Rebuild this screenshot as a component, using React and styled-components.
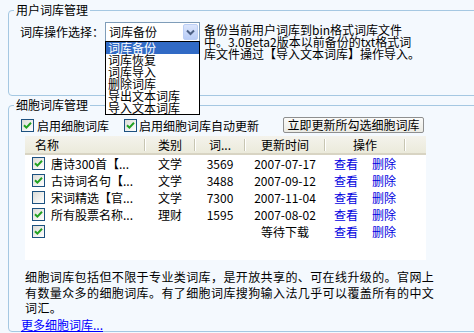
import React from "react";
import styled, { createGlobalStyle } from "styled-components";

const GlobalStyle = createGlobalStyle`
  html, body {
    margin: 0;
    padding: 0;
    background: #f4f9fe;
    overflow: hidden;
  }
  body {
    font-family: "Noto Sans CJK SC", "Noto Sans", sans-serif;
    font-size: 12px;
    color: #000;
  }
`;

const Page = styled.div`
  width: 474px;
  height: 333px;
  overflow: hidden;
  padding-top: 3px;
  box-sizing: border-box;
`;

const Group = styled.fieldset`
  margin: 0 0 2px 8px;
  padding: 0;
  width: 490px;
  height: ${(p) => p.$h}px;
  box-sizing: border-box;
  border: 1px solid #a5c8e2;
  border-radius: 4px;
  min-inline-size: 0;
`;

const Legend = styled.legend`
  margin-left: 5px;
  padding: 0 2px;
  line-height: 14px;
  font-size: 12px;
`;

const OpRow = styled.div`
  display: flex;
  align-items: flex-start;
  padding: 5px 0 0 11px;
`;

const OpLabel = styled.span`
  width: 85px;
  line-height: 20px;
  white-space: nowrap;
`;

const Select = styled.div`
  position: relative;
  width: 95px;
  height: 20px;
  box-sizing: border-box;
  border: 1px solid #7f9db9;
  background: #fff;
  display: flex;
  align-items: center;
`;

const SelectValue = styled.span`
  flex: 1;
  padding-left: 3px;
  line-height: 18px;
`;

const ArrowBtn = styled.span`
  width: 15px;
  height: 16px;
  margin-right: 1px;
  box-sizing: border-box;
  border: 1px solid #bccff5;
  border-radius: 2px;
  background: linear-gradient(#dbe5fc, #b9cdf7);
  display: flex;
  align-items: center;
  justify-content: center;
`;

const DropList = styled.ul`
  position: absolute;
  top: 18px;
  left: -1px;
  width: 95px;
  margin: 0;
  padding: 0;
  list-style: none;
  box-sizing: border-box;
  border: 1px solid #000;
  background: #fff;
  z-index: 5;
`;

const DropItem = styled.li`
  line-height: 12px;
  height: 12px;
  padding-left: 2px;
  white-space: nowrap;
  background: ${(p) => (p.$active ? "#316ac5" : "transparent")};
  color: ${(p) => (p.$active ? "#fff" : "#000")};
`;

const Desc = styled.div`
  margin: 2px 0 0 4px;
  line-height: 12px;
  white-space: nowrap;
`;

const OptionsRow = styled.div`
  display: flex;
  align-items: center;
  height: 16px;
  margin-top: 5px;
  padding-left: 12px;
`;

const CheckLabel = styled.label`
  display: flex;
  align-items: center;
  gap: ${(p) => p.$gap || 3}px;
  margin-right: ${(p) => p.$mr || 0}px;
  white-space: nowrap;
`;

const Box = styled.span`
  width: 13px;
  height: 13px;
  flex: none;
  box-sizing: border-box;
  border: 1px solid #1c5180;
  background: linear-gradient(135deg, #dcdcd7, #ffffff);
  display: flex;
  align-items: center;
  justify-content: center;
`;

const Button = styled.button`
  margin-left: 24px;
  width: 141px;
  height: 16px;
  padding: 0;
  box-sizing: border-box;
  border: 1px solid #8e8f8f;
  border-radius: 2px;
  background: linear-gradient(#fbfbf9, #ebebe4);
  font-family: inherit;
  font-size: 12px;
  line-height: 14px;
  color: #000;
`;

const ListView = styled.div`
  margin: 3px 0 0 16px;
  width: 401px;
  height: 124px;
  background: #fff;
`;

const Grid = styled.div`
  display: grid;
  grid-template-columns: 120px 50px 50px 80px 80px 21px;
`;

const Header = styled(Grid)`
  height: 19px;
  box-sizing: border-box;
  background: linear-gradient(#f4f3ec, #ebeadb);
  border-bottom: 2px solid #d8d4c3;
`;

const HeadCell = styled.div`
  position: relative;
  line-height: 17px;
  text-align: ${(p) => (p.$left ? "left" : "center")};
  padding-left: ${(p) => (p.$left ? 10 : 0)}px;
  &::after {
    content: "";
    display: ${(p) => (p.$last ? "none" : "block")};
    position: absolute;
    right: 0;
    top: 3px;
    width: 1px;
    height: 12px;
    background: #c7c5b2;
    box-shadow: 1px 0 0 #fff;
  }
`;

const Row = styled(Grid)`
  height: 17px;
  align-items: center;
`;

const NameCell = styled.div`
  display: flex;
  align-items: center;
  gap: 6px;
  padding-left: 7px;
  white-space: nowrap;
`;

const Cell = styled.div`
  text-align: center;
  white-space: nowrap;
  line-height: 17px;
`;

const Actions = styled.div`
  display: flex;
  justify-content: center;
  gap: 14px;
`;

const ActLink = styled.a`
  color: #0000e0;
  text-decoration: none;
`;

const Para = styled.p`
  margin: 9px 0 0 16px;
  letter-spacing: 0.4px;
  line-height: 15.5px;
  white-space: nowrap;
`;

const MoreLink = styled.a`
  display: inline-block;
  margin-left: 12px;
  line-height: 14px;
  color: #0000ff;
  text-decoration: underline;
`;

const Check = () => (
  <svg width="9" height="9" viewBox="0 0 9 9">
    <path d="M1 4.2 L3.4 6.6 L8 1.8" fill="none" stroke="#21a121" strokeWidth="2" />
  </svg>
);

const Checkbox = ({ checked }) => <Box>{checked && <Check />}</Box>;

const Chevron = () => (
  <svg width="9" height="7" viewBox="0 0 9 7">
    <path d="M1 1.5 L4.5 5 L8 1.5" fill="none" stroke="#4d6185" strokeWidth="2" />
  </svg>
);

const ops = ["词库备份", "词库恢复", "词库导入", "删除词库", "导出文本词库", "导入文本词库"];

const rows = [
  { on: true, name: "唐诗300首【...", cat: "文学", n: "3569", date: "2007-07-17" },
  { on: true, name: "古诗词名句【...", cat: "文学", n: "3488", date: "2007-09-12" },
  { on: false, name: "宋词精选【官...", cat: "文学", n: "7300", date: "2007-11-04" },
  { on: true, name: "所有股票名称...", cat: "理财", n: "1595", date: "2007-08-02" },
  { on: true, name: "", cat: "", n: "", date: "等待下载" },
];

const App = () => {
  return (
    <Page>
      <GlobalStyle />
      <Group $h={93}>
        <Legend>用户词库管理</Legend>
        <OpRow>
          <OpLabel>词库操作选择：</OpLabel>
          <Select>
            <SelectValue>词库备份</SelectValue>
            <ArrowBtn>
              <Chevron />
            </ArrowBtn>
            <DropList>
              {ops.map((op, i) => (
                <DropItem key={op} $active={i === 0}>
                  {op}
                </DropItem>
              ))}
            </DropList>
          </Select>
          <Desc>
            备份当前用户词库到bin格式词库文件
            <br />
            中。3.0Beta2版本以前备份的txt格式词
            <br />
            库文件通过【导入文本词库】操作导入。
          </Desc>
        </OpRow>
      </Group>
      <Group $h={234}>
        <Legend>细胞词库管理</Legend>
        <OptionsRow>
          <CheckLabel $mr={15}>
            <Checkbox checked />
            启用细胞词库
          </CheckLabel>
          <CheckLabel $gap={2}>
            <Checkbox checked />
            启用细胞词库自动更新
          </CheckLabel>
          <Button>立即更新所勾选细胞词库</Button>
        </OptionsRow>
        <ListView>
          <Header>
            <HeadCell $left>名称</HeadCell>
            <HeadCell>类别</HeadCell>
            <HeadCell>词...</HeadCell>
            <HeadCell>更新时间</HeadCell>
            <HeadCell>操作</HeadCell>
            <HeadCell $last />
          </Header>
          {rows.map((r, i) => (
            <Row key={i}>
              <NameCell>
                <Checkbox checked={r.on} />
                {r.name}
              </NameCell>
              <Cell>{r.cat}</Cell>
              <Cell>{r.n}</Cell>
              <Cell>{r.date}</Cell>
              <Actions>
                <ActLink>查看</ActLink>
                <ActLink>删除</ActLink>
              </Actions>
              <Cell />
            </Row>
          ))}
        </ListView>
        <Para>
          细胞词库包括但不限于专业类词库，是开放共享的、可在线升级的。官网上
          <br />
          有数量众多的细胞词库。有了细胞词库搜狗输入法几乎可以覆盖所有的中文
          <br />
          词汇。
        </Para>
        <MoreLink>更多细胞词库...</MoreLink>
      </Group>
    </Page>
  );
};

export default App;
